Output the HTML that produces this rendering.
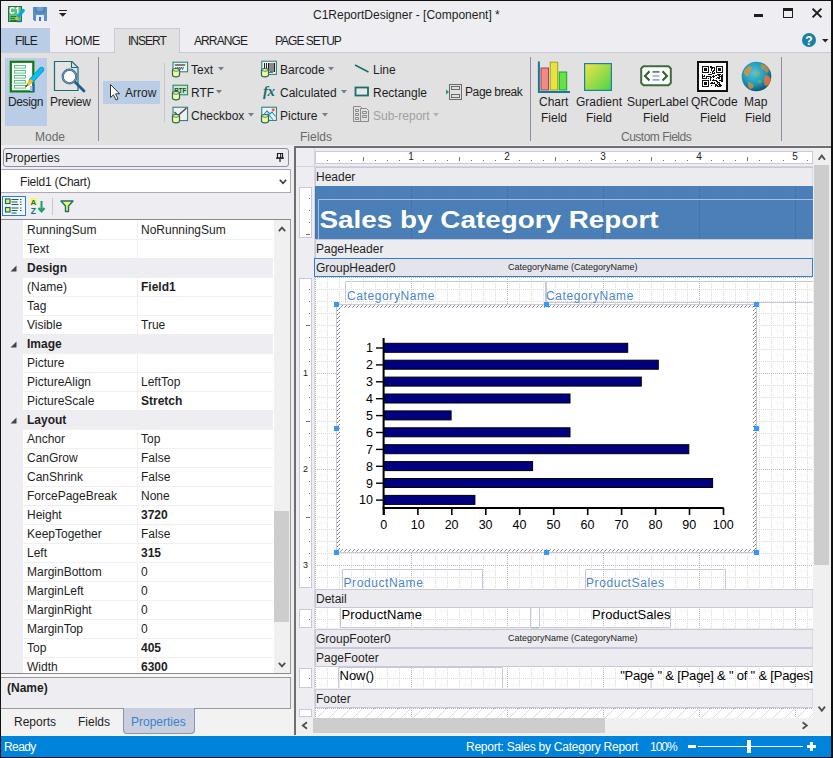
<!DOCTYPE html>
<html><head><meta charset="utf-8">
<style>
*{box-sizing:border-box}
html,body{margin:0;padding:0}
body{width:833px;height:758px;overflow:hidden;position:relative;background:#eeeef2;font-family:"Liberation Sans",sans-serif;font-size:12px;color:#1e1e1e}
.a{position:absolute}
.t{position:absolute;white-space:nowrap;line-height:14px;font-size:12px}
.b{font-weight:bold}
svg{position:absolute;overflow:visible}
</style></head><body>
<div class="a" style="left:0;top:0;width:833px;height:53px;background:#eeeef2"></div>
<div class="t" style="left:313px;top:8px;">C1ReportDesigner - [Component] *</div>
<div class="a" style="left:1px;top:28px;width:49px;height:25px;background:#b9cde6"></div>
<div class="t" style="left:15px;top:34px;letter-spacing:-0.9px">FILE</div>
<div class="t" style="left:65px;top:34px;letter-spacing:-0.3px">HOME</div>
<div class="a" style="left:114px;top:28px;width:66px;height:26px;background:#e1e1e1;border:1px solid #c7cad9;border-bottom:none"></div>
<div class="t" style="left:128px;top:34px;letter-spacing:-1px">INSERT</div>
<div class="t" style="left:194px;top:34px;letter-spacing:-0.9px">ARRANGE</div>
<div class="t" style="left:275px;top:34px;letter-spacing:-1px">PAGE SETUP</div>
<div class="a" style="left:0;top:52px;width:114px;height:1px;background:#c7cad9"></div>
<div class="a" style="left:180px;top:52px;width:653px;height:1px;background:#c7cad9"></div>
<div class="a" style="left:0;top:53px;width:833px;height:92px;background:#e1e1e1"></div>


<!-- ===== TITLE BAR ICONS ===== -->
<svg style="left:7px;top:5px" width="18" height="18" viewBox="0 0 18 18">
 <rect x="1.5" y="1.5" width="13" height="15" fill="#5cbf80" stroke="#2e6e3c" stroke-width="1"/>
 <path d="M7.2 3.6 Q6.6 2.6 5.2 2.6 Q3.2 2.6 3.2 5.4 Q3.2 8.2 5.2 8.2 Q6.6 8.2 7.2 7.2" fill="none" stroke="#fff" stroke-width="1.3"/><path d="M9 3.8 L10.8 2.6 V8.4" fill="none" stroke="#fff" stroke-width="1.3"/>
 <path d="M3.5 11.5h6M3.5 13.5h5M3.5 15.5h6" stroke="#0b8a2a" stroke-width="1"/>
 <path d="M16.3 5.5 L10.5 12.5" stroke="#00a8f0" stroke-width="3.2" stroke-linecap="round"/>
 <path d="M10.8 12.2 L8.7 14.6" stroke="#f5b800" stroke-width="2.6"/>
 <path d="M9 15.5 l-1 1" stroke="#222" stroke-width="1"/>
 <path d="M10 16.5 h4" stroke="#1f60c0" stroke-width="1.4"/>
</svg>
<svg style="left:33px;top:7px" width="14" height="14" viewBox="0 0 14 14">
 <path d="M0 0h14v14H1.5L0 12.5z" fill="#5b8fc8"/>
 <rect x="3" y="0" width="8" height="5" fill="#6f9fd6"/>
 <path d="M3 0v5h8V0" fill="none" stroke="#3f73b0" stroke-width="1"/>
 <rect x="3" y="8" width="8" height="6" fill="#e8eef8"/>
 <rect x="6" y="10" width="2" height="4" fill="#3f73b0"/>
</svg>
<div class="a" style="left:59px;top:10px;width:8px;height:1px;background:#222"></div>
<svg style="left:59px;top:13px" width="8" height="4" viewBox="0 0 8 4"><path d="M0 0h7.5L3.75 3.8z" fill="#222"/></svg>

<div class="a" style="left:754px;top:14px;width:9px;height:2.6px;background:#1e1e1e"></div>
<div class="a" style="left:783px;top:8px;width:10px;height:10px;border:1px solid #1e1e1e;border-top:3px solid #1e1e1e"></div>
<svg style="left:812px;top:8px" width="10" height="10" viewBox="0 0 10 10"><path d="M0.6 0.6 9.4 9.4M9.4 0.6 0.6 9.4" stroke="#1e1e1e" stroke-width="2"/></svg>
<svg style="left:802px;top:33px" width="14" height="14" viewBox="0 0 14 14"><circle cx="7" cy="7" r="7" fill="#1b7fa6"/><text x="7" y="11.5" text-anchor="middle" font-family="Liberation Sans" font-weight="bold" font-size="12" fill="#fff">?</text></svg>
<svg style="left:822px;top:39px" width="7" height="4" viewBox="0 0 7 4"><path d="M0 0h6.5L3.25 3.5z" fill="#222"/></svg>

<!-- ===== RIBBON CONTENT ===== -->
<!-- Mode group -->
<div class="a" style="left:5px;top:58px;width:42px;height:68px;background:#b9cde6"></div>
<svg style="left:9px;top:60px" width="36" height="34" viewBox="0 0 36 34">
 <rect x="1.8" y="1.8" width="22.5" height="29.6" fill="#fff" stroke="#0e7a12" stroke-width="2.2"/>
 <g fill="none" stroke="#5cc48a" stroke-width="1"><rect x="5.5" y="5.5" width="11" height="2.6"/><rect x="5.5" y="10.5" width="11" height="2.6"/><rect x="5.5" y="15.5" width="11" height="2.6"/><rect x="5.5" y="20.5" width="11" height="2.6"/><rect x="5.5" y="25.5" width="11" height="2.6"/></g>
 <path d="M32.5 9.5 L22.5 20.5" stroke="#1a8fd0" stroke-width="5.4" stroke-linecap="round"/>
 <path d="M32.5 9.5 L22.5 20.5" stroke="#00c0f4" stroke-width="3.8" stroke-linecap="round"/>
 <path d="M22.8 20.2 L18.6 24.8" stroke="#f7c20a" stroke-width="3.4"/>
 <path d="M18.8 24.6 l-2 2" stroke="#222" stroke-width="1.2"/>
 <path d="M21 26h3v5h-3z" fill="#a9c6ea"/><path d="M24.5 24v8" stroke="#1f5fb0" stroke-width="2"/>
</svg>
<div class="t" style="left:8px;top:95px;letter-spacing:-0.4px">Design</div>
<svg style="left:53px;top:60px" width="34" height="34" viewBox="0 0 34 34">
 <path d="M1.5 1.5h17.5l6 6V30.5H1.5z" fill="#e4e4e4" stroke="#1a6e72" stroke-width="1.2"/>
 <path d="M18.5 1.5v6h6" fill="none" stroke="#1a6e72" stroke-width="1.1"/>
 <path d="M21 21 L31 31" stroke="#1f5d92" stroke-width="2.8" stroke-linecap="round"/>
 <circle cx="16.5" cy="16.5" r="6.8" fill="#fff" stroke="#2a5f8e" stroke-width="2.2"/>
 <circle cx="16.5" cy="16.5" r="6.8" fill="none" stroke="#8fb0cc" stroke-width="0.8"/>
</svg>
<div class="t" style="left:50px;top:95px;letter-spacing:-0.3px">Preview</div>
<div class="t" style="left:35px;top:130px;color:#6a6a6a">Mode</div>
<div class="a" style="left:98px;top:57px;width:1px;height:84px;background:#8e8ea2"></div>

<!-- Arrow -->
<div class="a" style="left:103px;top:81px;width:57px;height:23px;background:#b9cde6"></div>
<svg style="left:109px;top:83px" width="12" height="18" viewBox="0 0 12 18"><path d="M1.5 1.5 V14.5 L4.5 11.8 L7 17 L9 16 L6.6 10.8 L10.6 10.8 Z" fill="#fff" stroke="#333" stroke-width="1" stroke-linejoin="round"/></svg>
<div class="t" style="left:125px;top:86px">Arrow</div>
<div class="a" style="left:164px;top:63px;width:1px;height:59px;background:#c4c4d4"></div>

<!-- Fields group: col1 -->
<svg style="left:171px;top:61px" width="18" height="17" viewBox="0 0 18 17">
 <rect x="2" y="1.2" width="14.6" height="9.6" fill="#f2f2f2" stroke="#1f7a7a" stroke-width="1"/>
 <path d="M4 3l1 2 1-2 1 2 1-2 1 2 1-2 1 2 1-2 1 2 1-2M4.5 6l1 2.5 1-2.5 1 2.5 1-2.5 1 2.5 1-2.5 1 2.5 1-2.5" fill="none" stroke="#555" stroke-width="0.9"/>
 <path d="M1.5 9.2 Q1.2 7.5 5 7.5 Q8.8 7.5 8.5 9.2 V14 Q8.5 15.8 5 15.8 Q1.5 15.8 1.5 14 Z" fill="#fcfc90" stroke="#1a6e6e" stroke-width="1.2"/><path d="M2 9.6 Q5 11 8 9.6" fill="none" stroke="#1a6e6e" stroke-width="0.8"/>
</svg>
<div class="t" style="left:191px;top:63px">Text</div>
<svg style="left:218px;top:67px" width="7" height="4" viewBox="0 0 7 4"><path d="M0 0h6L3 3.5z" fill="#7b7b90"/></svg>

<svg style="left:171px;top:84px" width="18" height="17" viewBox="0 0 18 17">
 <rect x="2" y="1.2" width="14.6" height="9.6" fill="#bdf0bd" stroke="#1f7a7a" stroke-width="1"/>
 <text x="3.2" y="8.6" font-family="Liberation Sans" font-size="7" font-weight="bold" fill="#333" textLength="12" lengthAdjust="spacingAndGlyphs">RTF</text>
 <path d="M1.5 9.2 Q1.2 7.5 5 7.5 Q8.8 7.5 8.5 9.2 V14 Q8.5 15.8 5 15.8 Q1.5 15.8 1.5 14 Z" fill="#fcfc90" stroke="#1a6e6e" stroke-width="1.2"/><path d="M2 9.6 Q5 11 8 9.6" fill="none" stroke="#1a6e6e" stroke-width="0.8"/>
</svg>
<div class="t" style="left:191px;top:86px">RTF</div>
<svg style="left:216px;top:90px" width="7" height="4" viewBox="0 0 7 4"><path d="M0 0h6L3 3.5z" fill="#7b7b90"/></svg>

<svg style="left:171px;top:106px" width="18" height="18" viewBox="0 0 18 18">
 <rect x="2" y="1.2" width="14.6" height="13.4" fill="#efefef" stroke="#1f7a7a" stroke-width="1"/>
 <path d="M3.5 6 L7 9.5 L15.5 2" fill="none" stroke="#444" stroke-width="1.3"/>
 <path d="M1.5 10.2 Q1.2 8.5 5 8.5 Q8.8 8.5 8.5 10.2 V15 Q8.5 16.8 5 16.8 Q1.5 16.8 1.5 15 Z" fill="#fcfc90" stroke="#1a6e6e" stroke-width="1.2"/><path d="M2 10.6 Q5 12 8 10.6" fill="none" stroke="#1a6e6e" stroke-width="0.8"/>
</svg>
<div class="t" style="left:191px;top:109px">Checkbox</div>
<svg style="left:248px;top:113px" width="7" height="4" viewBox="0 0 7 4"><path d="M0 0h6L3 3.5z" fill="#7b7b90"/></svg>

<!-- col2 -->
<svg style="left:260px;top:60px" width="18" height="18" viewBox="0 0 18 18">
 <rect x="1.8" y="1.2" width="14.6" height="13.2" fill="#f2f2f2" stroke="#1f7a7a" stroke-width="1"/>
 <g fill="#222"><rect x="4" y="3" width="1" height="9"/><rect x="6" y="3" width="1" height="9"/><rect x="8" y="3" width="1.5" height="8"/><rect x="10.5" y="3" width="1" height="9"/><rect x="12.5" y="3" width="1" height="9"/><rect x="14" y="3" width="1" height="9"/></g><path d="M9 11.5l1 1.5 1-1.5 1 1.5 1-1.5" fill="none" stroke="#222" stroke-width="0.7"/>
 <path d="M1.5 10.2 Q1.2 8.5 5 8.5 Q8.8 8.5 8.5 10.2 V15 Q8.5 16.8 5 16.8 Q1.5 16.8 1.5 15 Z" fill="#fcfc90" stroke="#1a6e6e" stroke-width="1.2"/><path d="M2 10.6 Q5 12 8 10.6" fill="none" stroke="#1a6e6e" stroke-width="0.8"/>
</svg>
<div class="t" style="left:280px;top:63px">Barcode</div>
<svg style="left:328px;top:67px" width="7" height="4" viewBox="0 0 7 4"><path d="M0 0h6L3 3.5z" fill="#7b7b90"/></svg>

<div class="t" style="left:263px;top:84px;font-family:'Liberation Serif';font-style:italic;font-weight:bold;font-size:15px;color:#1a6e6e;letter-spacing:-0.5px">fx</div>
<div class="t" style="left:280px;top:86px">Calculated</div>
<svg style="left:341px;top:90px" width="7" height="4" viewBox="0 0 7 4"><path d="M0 0h6L3 3.5z" fill="#7b7b90"/></svg>

<svg style="left:260px;top:106px" width="18" height="18" viewBox="0 0 18 18">
 <rect x="1.8" y="1.2" width="14.6" height="13.2" fill="#f2f2f2" stroke="#1f7a7a" stroke-width="1"/>
 <path d="M2.5 10 L7 5 L10 8 L12 6 L15.5 10.5" fill="none" stroke="#1c8fb5" stroke-width="1.1"/>
 <path d="M4 12 L8 8 L13 13.5" fill="none" stroke="#1c8fb5" stroke-width="1.1"/>
 <circle cx="13.2" cy="3.8" r="1.6" fill="#f05a5a"/>
 <path d="M1.5 10.2 Q1.2 8.5 5 8.5 Q8.8 8.5 8.5 10.2 V15 Q8.5 16.8 5 16.8 Q1.5 16.8 1.5 15 Z" fill="#fcfc90" stroke="#1a6e6e" stroke-width="1.2"/><path d="M2 10.6 Q5 12 8 10.6" fill="none" stroke="#1a6e6e" stroke-width="0.8"/>
</svg>
<div class="t" style="left:280px;top:109px">Picture</div>
<svg style="left:322px;top:113px" width="7" height="4" viewBox="0 0 7 4"><path d="M0 0h6L3 3.5z" fill="#7b7b90"/></svg>

<!-- col3 -->
<svg style="left:354px;top:64px" width="16" height="10" viewBox="0 0 16 10"><path d="M1 1 L14.5 8" stroke="#1a6e6e" stroke-width="1.5"/></svg>
<div class="t" style="left:373px;top:63px">Line</div>
<svg style="left:354px;top:86px" width="16" height="11" viewBox="0 0 16 11"><rect x="1.5" y="1.5" width="12.5" height="8" fill="#e8e8e8" stroke="#1a6e6e" stroke-width="1.8"/></svg>
<div class="t" style="left:373px;top:86px">Rectangle</div>
<svg style="left:353px;top:106px" width="17" height="17" viewBox="0 0 17 17" fill="none" stroke="#8a8a8a" stroke-width="1">
 <path d="M0.5 0.5h7l1 1v14h-8z" fill="#e1e1e1"/><path d="M2.5 3.5h3v2h-3zM2.5 7.5h3v2h-3zM2.5 11.5h3v2h-3z"/>
 <path d="M7.5 2.5h6l2 2v11h-8z" fill="#e1e1e1"/><path d="M9.5 5.5h4v2h-4zM9.5 9.5h4v2h-4z"/>
</svg>
<div class="t" style="left:373px;top:109px;color:#a0a0a0">Sub-report</div>
<svg style="left:433px;top:113px" width="7" height="4" viewBox="0 0 7 4"><path d="M0 0h6L3 3.5z" fill="#b0b0b8"/></svg>
<div class="t" style="left:300px;top:130px;color:#6a6a6a">Fields</div>

<!-- Page break -->
<svg style="left:445px;top:83px" width="18" height="18" viewBox="0 0 18 18" fill="none" stroke="#6a6a6a" stroke-width="1">
 <path d="M4.5 1v16M16.5 1v16M4 1.5h13M4 16.5h13"/>
 <rect x="6.5" y="3.5" width="8" height="3"/><rect x="6.5" y="11.5" width="8" height="3"/>
 <path d="M1 6.5v5l3-2.5z" fill="#1a9a70" stroke="none"/>
</svg>
<div class="t" style="left:465px;top:85px;letter-spacing:-0.4px">Page break</div>

<div class="a" style="left:530px;top:57px;width:1px;height:84px;background:#8e8ea2"></div>

<!-- Custom Fields -->
<svg style="left:537px;top:60px" width="34" height="34" viewBox="0 0 34 34">
 <rect x="4" y="8" width="7.5" height="22" fill="#f08a8a" stroke="#a84444" stroke-width="1"/>
 <rect x="13.2" y="2.2" width="7.5" height="27.8" fill="#e4e448" stroke="#a8a010" stroke-width="1"/>
 <rect x="22.2" y="12" width="7.5" height="18" fill="#64e24c" stroke="#20a020" stroke-width="1"/>
 <path d="M1.9 1.5 V32 H33" fill="none" stroke="#16789a" stroke-width="2"/>
</svg>
<div class="t" style="left:539px;top:95px">Chart</div>
<div class="t" style="left:541px;top:111px">Field</div>

<svg style="left:584px;top:63px" width="28" height="28" viewBox="0 0 28 28">
 <defs><linearGradient id="gr" x1="0" y1="0" x2="1" y2="1"><stop offset="0" stop-color="#f4e448"/><stop offset="1" stop-color="#48d448"/></linearGradient></defs>
 <rect x="0.6" y="0.6" width="26.8" height="26.8" fill="url(#gr)" stroke="#1b7fa6" stroke-width="1.2"/>
</svg>
<div class="t" style="left:576px;top:95px">Gradient</div>
<div class="t" style="left:586px;top:111px">Field</div>

<svg style="left:640px;top:64px" width="33" height="24" viewBox="0 0 33 24">
 <path d="M3.5 2.2H28.5L30.8 4.5V19L28.5 21.3H3.5L1.2 19V4.5Z" fill="#fff" stroke="#3d6b3d" stroke-width="2"/>
 <path d="M9.5 7.2L5 11.9L9.5 16.6M22.5 7.2L27 11.9L22.5 16.6" fill="none" stroke="#336633" stroke-width="2.2"/>
 <path d="M12.5 7.9H19.5" stroke="#4a7a4a" stroke-width="1.6"/>
 <path d="M12.5 12H19.5M12.5 15.9H19.5" stroke="#95aadc" stroke-width="1.6"/>
</svg>
<div class="t" style="left:627px;top:95px">SuperLabel</div>
<div class="t" style="left:643px;top:111px">Field</div>

<svg style="left:697px;top:61px" width="31" height="31" viewBox="0 0 31 31">
 <rect x="1" y="1" width="29" height="29" fill="#fff" stroke="#111" stroke-width="2"/>
 <path fill="#111" d="M5 5h7v1h-7zM13 5h2v1h-2zM19 5h7v1h-7zM5 6h1v1h-1zM11 6h1v1h-1zM13 6h5v1h-5zM19 6h1v1h-1zM25 6h1v1h-1zM5 7h1v1h-1zM7 7h3v1h-3zM11 7h1v1h-1zM14 7h2v1h-2zM17 7h1v1h-1zM19 7h1v1h-1zM21 7h3v1h-3zM25 7h1v1h-1zM5 8h1v1h-1zM7 8h3v1h-3zM11 8h1v1h-1zM14 8h1v1h-1zM17 8h1v1h-1zM19 8h1v1h-1zM21 8h3v1h-3zM25 8h1v1h-1zM5 9h1v1h-1zM7 9h3v1h-3zM11 9h1v1h-1zM14 9h1v1h-1zM16 9h2v1h-2zM19 9h1v1h-1zM21 9h3v1h-3zM25 9h1v1h-1zM5 10h1v1h-1zM11 10h1v1h-1zM15 10h2v1h-2zM19 10h1v1h-1zM25 10h1v1h-1zM5 11h7v1h-7zM13 11h1v1h-1zM15 11h1v1h-1zM17 11h1v1h-1zM19 11h7v1h-7zM15 12h3v1h-3zM5 13h1v1h-1zM11 13h4v1h-4zM20 13h4v1h-4zM25 13h1v1h-1zM5 14h1v1h-1zM7 14h1v1h-1zM16 14h1v1h-1zM18 14h2v1h-2zM21 14h2v1h-2zM24 14h2v1h-2zM5 15h3v1h-3zM9 15h5v1h-5zM15 15h3v1h-3zM22 15h4v1h-4zM5 16h1v1h-1zM9 16h1v1h-1zM13 16h2v1h-2zM16 16h1v1h-1zM20 16h3v1h-3zM24 16h2v1h-2zM5 17h5v1h-5zM11 17h1v1h-1zM13 17h1v1h-1zM19 17h1v1h-1zM21 17h2v1h-2zM24 17h2v1h-2zM13 18h1v1h-1zM16 18h1v1h-1zM24 18h2v1h-2zM5 19h7v1h-7zM13 19h1v1h-1zM15 19h5v1h-5zM22 19h4v1h-4zM5 20h1v1h-1zM11 20h1v1h-1zM19 20h2v1h-2zM24 20h2v1h-2zM5 21h1v1h-1zM7 21h3v1h-3zM11 21h1v1h-1zM14 21h2v1h-2zM17 21h1v1h-1zM20 21h3v1h-3zM5 22h1v1h-1zM7 22h3v1h-3zM11 22h1v1h-1zM13 22h5v1h-5zM20 22h1v1h-1zM22 22h1v1h-1zM5 23h1v1h-1zM7 23h3v1h-3zM11 23h1v1h-1zM18 23h2v1h-2zM21 23h3v1h-3zM5 24h1v1h-1zM11 24h1v1h-1zM14 24h1v1h-1zM18 24h3v1h-3zM22 24h3v1h-3zM5 25h7v1h-7zM18 25h1v1h-1zM20 25h4v1h-4z"/>
</svg>
<div class="t" style="left:691px;top:95px">QRCode</div>
<div class="t" style="left:700px;top:111px">Field</div>

<svg style="left:741px;top:61px" width="31" height="31" viewBox="0 0 31 31">
 <defs><radialGradient id="gl" cx="0.42" cy="0.38" r="0.65"><stop offset="0" stop-color="#4cc8dc"/><stop offset="0.6" stop-color="#1d98b8"/><stop offset="1" stop-color="#0c5068"/></radialGradient>
 <clipPath id="gc"><circle cx="15.5" cy="15.5" r="14.8"/></clipPath></defs>
 <circle cx="15.5" cy="15.5" r="14.8" fill="url(#gl)"/>
 <g clip-path="url(#gc)">
 <path d="M3 10 Q6 5 10 5 Q12 8 10 10 Q7 12 8 15 Q5 16 4 14 Q2 12 3 10Z" fill="#e49036" opacity="0.8"/>
 <path d="M20 3 Q25 3 28 8 Q28 11 26 12 Q23 9 21 8 Q19 6 20 3Z" fill="#e08c3a" opacity="0.7"/>
 <path d="M24 14 Q30 15 30 20 Q28 25 24 25 Q22 20 24 14Z" fill="#e6743a" opacity="0.9"/>
 <path d="M7 21 Q11 21 13 25 Q12 28 9 28 Q6 26 7 21Z" fill="#d8903c" opacity="0.75"/>
 <path d="M13 11 Q17 9 19 12 Q18 16 14 15Z" fill="#c8a050" opacity="0.55"/>
 <path d="M17 19 Q20 18 21 21 Q19 23 17 22Z" fill="#88b050" opacity="0.6"/>
 </g>
</svg>
<div class="t" style="left:744px;top:95px">Map</div>
<div class="t" style="left:745px;top:111px">Field</div>
<div class="t" style="left:621px;top:130px;color:#6a6a6a;letter-spacing:-0.5px">Custom Fields</div>
<div class="a" style="left:781px;top:57px;width:1px;height:84px;background:#8e8ea2"></div>

<!-- ===== LEFT PANEL ===== -->
<div class="a" style="left:0;top:145px;width:294px;height:591px;background:#eeeef2"></div>
<div class="a" style="left:3px;top:148px;width:286px;height:19px;border:1px solid #8e8e9e;border-radius:3px;background:#eeeef2"></div>
<div class="t" style="left:5px;top:151px">Properties</div>
<svg style="left:276px;top:153px" width="8" height="9" viewBox="0 0 8 9"><path d="M1.5 0.5h5v4.5h-5z" fill="none" stroke="#1e1e1e" stroke-width="1.2"/><path d="M0 5.2h8M4 5v4" stroke="#1e1e1e" stroke-width="1.2"/><path d="M4.6 1v4" stroke="#1e1e1e" stroke-width="1"/></svg>
<div class="a" style="left:1px;top:169px;width:290px;height:24px;border:1px solid #a9a9b9;border-left:none;background:#fff"></div>
<div class="t" style="left:20px;top:175px;letter-spacing:-0.2px">Field1 (Chart)</div>
<svg style="left:279px;top:179px" width="8" height="6" viewBox="0 0 8 6"><path d="M0.8 0.8 L4 4.4 L7.2 0.8" fill="none" stroke="#3a3a3a" stroke-width="1.6"/></svg>

<!-- toolbar -->
<div class="a" style="left:2px;top:196px;width:24px;height:20px;border:1px solid #2a7ed8;background:#f4f7fb"></div>
<svg style="left:5px;top:198px" width="18" height="16" viewBox="0 0 18 16">
 <rect x="0.5" y="1" width="4.5" height="4.5" fill="#ecec70" stroke="#1a6e5a" stroke-width="1.2"/>
 <rect x="0.5" y="9.5" width="4.5" height="4.5" fill="#ecec70" stroke="#1a6e5a" stroke-width="1.2"/>
 <path d="M6.5 1.5h7M6.5 4h6M6.5 6.5h7M6.5 10h7M6.5 12.5h6M6.5 15h5" stroke="#1a5e5a" stroke-width="1.2"/>
 <path d="M15 1.5h1.5M15 4h1.5M15 6.5h1.5M15 10h1.5M15 12.5h1.5" stroke="#1a5e5a" stroke-width="1.2"/>
</svg>
<svg style="left:30px;top:198px" width="16" height="16" viewBox="0 0 16 16">
 <rect x="0" y="0" width="7" height="7" fill="#f8f870"/>
 <text x="0.5" y="7" font-family="Liberation Sans" font-weight="bold" font-size="8" fill="#1a6e6e">A</text>
 <text x="0.7" y="15.5" font-family="Liberation Sans" font-weight="bold" font-size="8.5" fill="#1a6e6e">Z</text>
 <path d="M11.5 3v10M8.5 10l3 3.5 3-3.5" fill="none" stroke="#18a060" stroke-width="2"/>
</svg>
<div class="a" style="left:52px;top:198px;width:1px;height:17px;background:#c8c8d0"></div>
<svg style="left:60px;top:200px" width="14" height="12" viewBox="0 0 14 12"><path d="M1 1h12L8.5 6v5.5h-3V6z" fill="#f8f870" stroke="#1a6e6e" stroke-width="1.4" stroke-linejoin="round"/></svg>

<!-- grid -->
<div class="a" style="left:1px;top:674px;width:290px;height:3px;background:#f7f7f7"></div>
<div class="a" style="left:1px;top:219px;width:290px;height:455px;border-top:1px solid #8a8a8a;border-right:1px solid #9a9a9a;border-bottom:1px solid #8a8a8a;background:#fff"></div>
<div class="a" style="left:1px;top:220px;width:22px;height:453px;background:#eeeef2"></div>
<div class="a" style="left:137px;top:220px;width:1px;height:453px;background:#f0f0f0"></div>
<div id="grid">
<div class="a" style="left:23px;top:239px;width:250px;height:1px;background:#f0f0f0"></div>
<div class="t" style="left:27px;top:223px">RunningSum</div>
<div class="t" style="left:141px;top:223px">NoRunningSum</div>
<div class="a" style="left:23px;top:258px;width:250px;height:1px;background:#f0f0f0"></div>
<div class="t" style="left:27px;top:242px">Text</div>
<div class="a" style="left:23px;top:277px;width:250px;height:1px;background:#f0f0f0"></div>
<div class="a" style="left:1px;top:258px;width:272px;height:19px;background:#eeeef2"></div>
<svg style="left:10px;top:265px" width="7" height="7" viewBox="0 0 7 7"><path d="M6.5 0.5V6.5H0.5z" fill="#444"/></svg>
<div class="t b" style="left:27px;top:261px">Design</div>
<div class="a" style="left:23px;top:296px;width:250px;height:1px;background:#f0f0f0"></div>
<div class="t" style="left:27px;top:280px">(Name)</div>
<div class="t b" style="left:141px;top:280px">Field1</div>
<div class="a" style="left:23px;top:315px;width:250px;height:1px;background:#f0f0f0"></div>
<div class="t" style="left:27px;top:299px">Tag</div>
<div class="a" style="left:23px;top:334px;width:250px;height:1px;background:#f0f0f0"></div>
<div class="t" style="left:27px;top:318px">Visible</div>
<div class="t" style="left:141px;top:318px">True</div>
<div class="a" style="left:23px;top:353px;width:250px;height:1px;background:#f0f0f0"></div>
<div class="a" style="left:1px;top:334px;width:272px;height:19px;background:#eeeef2"></div>
<svg style="left:10px;top:341px" width="7" height="7" viewBox="0 0 7 7"><path d="M6.5 0.5V6.5H0.5z" fill="#444"/></svg>
<div class="t b" style="left:27px;top:337px">Image</div>
<div class="a" style="left:23px;top:372px;width:250px;height:1px;background:#f0f0f0"></div>
<div class="t" style="left:27px;top:356px">Picture</div>
<div class="a" style="left:23px;top:391px;width:250px;height:1px;background:#f0f0f0"></div>
<div class="t" style="left:27px;top:375px">PictureAlign</div>
<div class="t" style="left:141px;top:375px">LeftTop</div>
<div class="a" style="left:23px;top:410px;width:250px;height:1px;background:#f0f0f0"></div>
<div class="t" style="left:27px;top:394px">PictureScale</div>
<div class="t b" style="left:141px;top:394px">Stretch</div>
<div class="a" style="left:23px;top:429px;width:250px;height:1px;background:#f0f0f0"></div>
<div class="a" style="left:1px;top:410px;width:272px;height:19px;background:#eeeef2"></div>
<svg style="left:10px;top:417px" width="7" height="7" viewBox="0 0 7 7"><path d="M6.5 0.5V6.5H0.5z" fill="#444"/></svg>
<div class="t b" style="left:27px;top:413px">Layout</div>
<div class="a" style="left:23px;top:448px;width:250px;height:1px;background:#f0f0f0"></div>
<div class="t" style="left:27px;top:432px">Anchor</div>
<div class="t" style="left:141px;top:432px">Top</div>
<div class="a" style="left:23px;top:467px;width:250px;height:1px;background:#f0f0f0"></div>
<div class="t" style="left:27px;top:451px">CanGrow</div>
<div class="t" style="left:141px;top:451px">False</div>
<div class="a" style="left:23px;top:486px;width:250px;height:1px;background:#f0f0f0"></div>
<div class="t" style="left:27px;top:470px">CanShrink</div>
<div class="t" style="left:141px;top:470px">False</div>
<div class="a" style="left:23px;top:505px;width:250px;height:1px;background:#f0f0f0"></div>
<div class="t" style="left:27px;top:489px">ForcePageBreak</div>
<div class="t" style="left:141px;top:489px">None</div>
<div class="a" style="left:23px;top:524px;width:250px;height:1px;background:#f0f0f0"></div>
<div class="t" style="left:27px;top:508px">Height</div>
<div class="t b" style="left:141px;top:508px">3720</div>
<div class="a" style="left:23px;top:543px;width:250px;height:1px;background:#f0f0f0"></div>
<div class="t" style="left:27px;top:527px">KeepTogether</div>
<div class="t" style="left:141px;top:527px">False</div>
<div class="a" style="left:23px;top:562px;width:250px;height:1px;background:#f0f0f0"></div>
<div class="t" style="left:27px;top:546px">Left</div>
<div class="t b" style="left:141px;top:546px">315</div>
<div class="a" style="left:23px;top:581px;width:250px;height:1px;background:#f0f0f0"></div>
<div class="t" style="left:27px;top:565px">MarginBottom</div>
<div class="t" style="left:141px;top:565px">0</div>
<div class="a" style="left:23px;top:600px;width:250px;height:1px;background:#f0f0f0"></div>
<div class="t" style="left:27px;top:584px">MarginLeft</div>
<div class="t" style="left:141px;top:584px">0</div>
<div class="a" style="left:23px;top:619px;width:250px;height:1px;background:#f0f0f0"></div>
<div class="t" style="left:27px;top:603px">MarginRight</div>
<div class="t" style="left:141px;top:603px">0</div>
<div class="a" style="left:23px;top:638px;width:250px;height:1px;background:#f0f0f0"></div>
<div class="t" style="left:27px;top:622px">MarginTop</div>
<div class="t" style="left:141px;top:622px">0</div>
<div class="a" style="left:23px;top:657px;width:250px;height:1px;background:#f0f0f0"></div>
<div class="t" style="left:27px;top:641px">Top</div>
<div class="t b" style="left:141px;top:641px">405</div>
<div class="t" style="left:27px;top:660px">Width</div>
<div class="t b" style="left:141px;top:660px">6300</div>
</div>
<!-- grid scrollbar -->
<div class="a" style="left:274px;top:220px;width:16px;height:453px;background:#f0f0f0"></div>
<div class="a" style="left:274px;top:511px;width:15px;height:111px;background:#cdcdcd"></div>
<svg style="left:278px;top:226px" width="8" height="6" viewBox="0 0 8 6"><path d="M0.8 5.2 L4 1.6 L7.2 5.2" fill="none" stroke="#505050" stroke-width="1.8"/></svg>
<svg style="left:278px;top:662px" width="8" height="6" viewBox="0 0 8 6"><path d="M0.8 0.8 L4 4.4 L7.2 0.8" fill="none" stroke="#505050" stroke-width="1.8"/></svg>

<!-- description -->
<div class="a" style="left:1px;top:677px;width:290px;height:32px;border:1px solid #9a9a9a;border-left:none;background:#eeeef2"></div>
<div class="t b" style="left:7px;top:681px">(Name)</div>

<!-- bottom tabs -->
<div class="a" style="left:1px;top:709px;width:293px;height:27px;background:#f2f2f2"></div>
<div class="t" style="left:14px;top:715px">Reports</div>
<div class="t" style="left:78px;top:715px">Fields</div>
<div class="a" style="left:123px;top:708px;width:72px;height:26px;background:#c9cfde;border:1px solid #8d93a8;border-top:none;border-radius:0 0 4px 4px"></div>
<div class="t" style="left:131px;top:715px;color:#3c80cc">Properties</div>

<svg style="left:0;top:0" width="833" height="758" viewBox="0 0 833 758" font-family="Liberation Sans">
<defs>
<pattern id="gHs" x="315" y="185" width="12" height="12" patternUnits="userSpaceOnUse"><rect x="0" y="0" width="1" height="1" fill="#4a7cb3"/><rect x="2" y="0" width="1" height="1" fill="#4a7cb3"/><rect x="4" y="0" width="1" height="1" fill="#4a7cb3"/><rect x="6" y="0" width="1" height="1" fill="#4a7cb3"/><rect x="8" y="0" width="1" height="1" fill="#4a7cb3"/><rect x="10" y="0" width="1" height="1" fill="#4a7cb3"/><rect x="0" y="2" width="1" height="1" fill="#4a7cb3"/><rect x="0" y="4" width="1" height="1" fill="#4a7cb3"/><rect x="0" y="6" width="1" height="1" fill="#4a7cb3"/><rect x="0" y="8" width="1" height="1" fill="#4a7cb3"/><rect x="0" y="10" width="1" height="1" fill="#4a7cb3"/></pattern><pattern id="gHL" x="315" y="185" width="96" height="96" patternUnits="userSpaceOnUse"><rect x="0" y="0" width="1" height="1" fill="#3b6aa0"/><rect x="2" y="0" width="1" height="1" fill="#3b6aa0"/><rect x="4" y="0" width="1" height="1" fill="#3b6aa0"/><rect x="6" y="0" width="1" height="1" fill="#3b6aa0"/><rect x="8" y="0" width="1" height="1" fill="#3b6aa0"/><rect x="10" y="0" width="1" height="1" fill="#3b6aa0"/><rect x="12" y="0" width="1" height="1" fill="#3b6aa0"/><rect x="14" y="0" width="1" height="1" fill="#3b6aa0"/><rect x="16" y="0" width="1" height="1" fill="#3b6aa0"/><rect x="18" y="0" width="1" height="1" fill="#3b6aa0"/><rect x="20" y="0" width="1" height="1" fill="#3b6aa0"/><rect x="22" y="0" width="1" height="1" fill="#3b6aa0"/><rect x="24" y="0" width="1" height="1" fill="#3b6aa0"/><rect x="26" y="0" width="1" height="1" fill="#3b6aa0"/><rect x="28" y="0" width="1" height="1" fill="#3b6aa0"/><rect x="30" y="0" width="1" height="1" fill="#3b6aa0"/><rect x="32" y="0" width="1" height="1" fill="#3b6aa0"/><rect x="34" y="0" width="1" height="1" fill="#3b6aa0"/><rect x="36" y="0" width="1" height="1" fill="#3b6aa0"/><rect x="38" y="0" width="1" height="1" fill="#3b6aa0"/><rect x="40" y="0" width="1" height="1" fill="#3b6aa0"/><rect x="42" y="0" width="1" height="1" fill="#3b6aa0"/><rect x="44" y="0" width="1" height="1" fill="#3b6aa0"/><rect x="46" y="0" width="1" height="1" fill="#3b6aa0"/><rect x="48" y="0" width="1" height="1" fill="#3b6aa0"/><rect x="50" y="0" width="1" height="1" fill="#3b6aa0"/><rect x="52" y="0" width="1" height="1" fill="#3b6aa0"/><rect x="54" y="0" width="1" height="1" fill="#3b6aa0"/><rect x="56" y="0" width="1" height="1" fill="#3b6aa0"/><rect x="58" y="0" width="1" height="1" fill="#3b6aa0"/><rect x="60" y="0" width="1" height="1" fill="#3b6aa0"/><rect x="62" y="0" width="1" height="1" fill="#3b6aa0"/><rect x="64" y="0" width="1" height="1" fill="#3b6aa0"/><rect x="66" y="0" width="1" height="1" fill="#3b6aa0"/><rect x="68" y="0" width="1" height="1" fill="#3b6aa0"/><rect x="70" y="0" width="1" height="1" fill="#3b6aa0"/><rect x="72" y="0" width="1" height="1" fill="#3b6aa0"/><rect x="74" y="0" width="1" height="1" fill="#3b6aa0"/><rect x="76" y="0" width="1" height="1" fill="#3b6aa0"/><rect x="78" y="0" width="1" height="1" fill="#3b6aa0"/><rect x="80" y="0" width="1" height="1" fill="#3b6aa0"/><rect x="82" y="0" width="1" height="1" fill="#3b6aa0"/><rect x="84" y="0" width="1" height="1" fill="#3b6aa0"/><rect x="86" y="0" width="1" height="1" fill="#3b6aa0"/><rect x="88" y="0" width="1" height="1" fill="#3b6aa0"/><rect x="90" y="0" width="1" height="1" fill="#3b6aa0"/><rect x="92" y="0" width="1" height="1" fill="#3b6aa0"/><rect x="94" y="0" width="1" height="1" fill="#3b6aa0"/><rect x="0" y="2" width="1" height="1" fill="#3b6aa0"/><rect x="0" y="4" width="1" height="1" fill="#3b6aa0"/><rect x="0" y="6" width="1" height="1" fill="#3b6aa0"/><rect x="0" y="8" width="1" height="1" fill="#3b6aa0"/><rect x="0" y="10" width="1" height="1" fill="#3b6aa0"/><rect x="0" y="12" width="1" height="1" fill="#3b6aa0"/><rect x="0" y="14" width="1" height="1" fill="#3b6aa0"/><rect x="0" y="16" width="1" height="1" fill="#3b6aa0"/><rect x="0" y="18" width="1" height="1" fill="#3b6aa0"/><rect x="0" y="20" width="1" height="1" fill="#3b6aa0"/><rect x="0" y="22" width="1" height="1" fill="#3b6aa0"/><rect x="0" y="24" width="1" height="1" fill="#3b6aa0"/><rect x="0" y="26" width="1" height="1" fill="#3b6aa0"/><rect x="0" y="28" width="1" height="1" fill="#3b6aa0"/><rect x="0" y="30" width="1" height="1" fill="#3b6aa0"/><rect x="0" y="32" width="1" height="1" fill="#3b6aa0"/><rect x="0" y="34" width="1" height="1" fill="#3b6aa0"/><rect x="0" y="36" width="1" height="1" fill="#3b6aa0"/><rect x="0" y="38" width="1" height="1" fill="#3b6aa0"/><rect x="0" y="40" width="1" height="1" fill="#3b6aa0"/><rect x="0" y="42" width="1" height="1" fill="#3b6aa0"/><rect x="0" y="44" width="1" height="1" fill="#3b6aa0"/><rect x="0" y="46" width="1" height="1" fill="#3b6aa0"/><rect x="0" y="48" width="1" height="1" fill="#3b6aa0"/><rect x="0" y="50" width="1" height="1" fill="#3b6aa0"/><rect x="0" y="52" width="1" height="1" fill="#3b6aa0"/><rect x="0" y="54" width="1" height="1" fill="#3b6aa0"/><rect x="0" y="56" width="1" height="1" fill="#3b6aa0"/><rect x="0" y="58" width="1" height="1" fill="#3b6aa0"/><rect x="0" y="60" width="1" height="1" fill="#3b6aa0"/><rect x="0" y="62" width="1" height="1" fill="#3b6aa0"/><rect x="0" y="64" width="1" height="1" fill="#3b6aa0"/><rect x="0" y="66" width="1" height="1" fill="#3b6aa0"/><rect x="0" y="68" width="1" height="1" fill="#3b6aa0"/><rect x="0" y="70" width="1" height="1" fill="#3b6aa0"/><rect x="0" y="72" width="1" height="1" fill="#3b6aa0"/><rect x="0" y="74" width="1" height="1" fill="#3b6aa0"/><rect x="0" y="76" width="1" height="1" fill="#3b6aa0"/><rect x="0" y="78" width="1" height="1" fill="#3b6aa0"/><rect x="0" y="80" width="1" height="1" fill="#3b6aa0"/><rect x="0" y="82" width="1" height="1" fill="#3b6aa0"/><rect x="0" y="84" width="1" height="1" fill="#3b6aa0"/><rect x="0" y="86" width="1" height="1" fill="#3b6aa0"/><rect x="0" y="88" width="1" height="1" fill="#3b6aa0"/><rect x="0" y="90" width="1" height="1" fill="#3b6aa0"/><rect x="0" y="92" width="1" height="1" fill="#3b6aa0"/><rect x="0" y="94" width="1" height="1" fill="#3b6aa0"/></pattern>
<pattern id="gGs" x="315" y="277" width="12" height="12" patternUnits="userSpaceOnUse"><rect x="0" y="0" width="1" height="1" fill="#dadada"/><rect x="2" y="0" width="1" height="1" fill="#dadada"/><rect x="4" y="0" width="1" height="1" fill="#dadada"/><rect x="6" y="0" width="1" height="1" fill="#dadada"/><rect x="8" y="0" width="1" height="1" fill="#dadada"/><rect x="10" y="0" width="1" height="1" fill="#dadada"/><rect x="0" y="2" width="1" height="1" fill="#dadada"/><rect x="0" y="4" width="1" height="1" fill="#dadada"/><rect x="0" y="6" width="1" height="1" fill="#dadada"/><rect x="0" y="8" width="1" height="1" fill="#dadada"/><rect x="0" y="10" width="1" height="1" fill="#dadada"/></pattern><pattern id="gGL" x="315" y="277" width="96" height="96" patternUnits="userSpaceOnUse"><rect x="0" y="0" width="1" height="1" fill="#b8b8b8"/><rect x="2" y="0" width="1" height="1" fill="#b8b8b8"/><rect x="4" y="0" width="1" height="1" fill="#b8b8b8"/><rect x="6" y="0" width="1" height="1" fill="#b8b8b8"/><rect x="8" y="0" width="1" height="1" fill="#b8b8b8"/><rect x="10" y="0" width="1" height="1" fill="#b8b8b8"/><rect x="12" y="0" width="1" height="1" fill="#b8b8b8"/><rect x="14" y="0" width="1" height="1" fill="#b8b8b8"/><rect x="16" y="0" width="1" height="1" fill="#b8b8b8"/><rect x="18" y="0" width="1" height="1" fill="#b8b8b8"/><rect x="20" y="0" width="1" height="1" fill="#b8b8b8"/><rect x="22" y="0" width="1" height="1" fill="#b8b8b8"/><rect x="24" y="0" width="1" height="1" fill="#b8b8b8"/><rect x="26" y="0" width="1" height="1" fill="#b8b8b8"/><rect x="28" y="0" width="1" height="1" fill="#b8b8b8"/><rect x="30" y="0" width="1" height="1" fill="#b8b8b8"/><rect x="32" y="0" width="1" height="1" fill="#b8b8b8"/><rect x="34" y="0" width="1" height="1" fill="#b8b8b8"/><rect x="36" y="0" width="1" height="1" fill="#b8b8b8"/><rect x="38" y="0" width="1" height="1" fill="#b8b8b8"/><rect x="40" y="0" width="1" height="1" fill="#b8b8b8"/><rect x="42" y="0" width="1" height="1" fill="#b8b8b8"/><rect x="44" y="0" width="1" height="1" fill="#b8b8b8"/><rect x="46" y="0" width="1" height="1" fill="#b8b8b8"/><rect x="48" y="0" width="1" height="1" fill="#b8b8b8"/><rect x="50" y="0" width="1" height="1" fill="#b8b8b8"/><rect x="52" y="0" width="1" height="1" fill="#b8b8b8"/><rect x="54" y="0" width="1" height="1" fill="#b8b8b8"/><rect x="56" y="0" width="1" height="1" fill="#b8b8b8"/><rect x="58" y="0" width="1" height="1" fill="#b8b8b8"/><rect x="60" y="0" width="1" height="1" fill="#b8b8b8"/><rect x="62" y="0" width="1" height="1" fill="#b8b8b8"/><rect x="64" y="0" width="1" height="1" fill="#b8b8b8"/><rect x="66" y="0" width="1" height="1" fill="#b8b8b8"/><rect x="68" y="0" width="1" height="1" fill="#b8b8b8"/><rect x="70" y="0" width="1" height="1" fill="#b8b8b8"/><rect x="72" y="0" width="1" height="1" fill="#b8b8b8"/><rect x="74" y="0" width="1" height="1" fill="#b8b8b8"/><rect x="76" y="0" width="1" height="1" fill="#b8b8b8"/><rect x="78" y="0" width="1" height="1" fill="#b8b8b8"/><rect x="80" y="0" width="1" height="1" fill="#b8b8b8"/><rect x="82" y="0" width="1" height="1" fill="#b8b8b8"/><rect x="84" y="0" width="1" height="1" fill="#b8b8b8"/><rect x="86" y="0" width="1" height="1" fill="#b8b8b8"/><rect x="88" y="0" width="1" height="1" fill="#b8b8b8"/><rect x="90" y="0" width="1" height="1" fill="#b8b8b8"/><rect x="92" y="0" width="1" height="1" fill="#b8b8b8"/><rect x="94" y="0" width="1" height="1" fill="#b8b8b8"/><rect x="0" y="2" width="1" height="1" fill="#b8b8b8"/><rect x="0" y="4" width="1" height="1" fill="#b8b8b8"/><rect x="0" y="6" width="1" height="1" fill="#b8b8b8"/><rect x="0" y="8" width="1" height="1" fill="#b8b8b8"/><rect x="0" y="10" width="1" height="1" fill="#b8b8b8"/><rect x="0" y="12" width="1" height="1" fill="#b8b8b8"/><rect x="0" y="14" width="1" height="1" fill="#b8b8b8"/><rect x="0" y="16" width="1" height="1" fill="#b8b8b8"/><rect x="0" y="18" width="1" height="1" fill="#b8b8b8"/><rect x="0" y="20" width="1" height="1" fill="#b8b8b8"/><rect x="0" y="22" width="1" height="1" fill="#b8b8b8"/><rect x="0" y="24" width="1" height="1" fill="#b8b8b8"/><rect x="0" y="26" width="1" height="1" fill="#b8b8b8"/><rect x="0" y="28" width="1" height="1" fill="#b8b8b8"/><rect x="0" y="30" width="1" height="1" fill="#b8b8b8"/><rect x="0" y="32" width="1" height="1" fill="#b8b8b8"/><rect x="0" y="34" width="1" height="1" fill="#b8b8b8"/><rect x="0" y="36" width="1" height="1" fill="#b8b8b8"/><rect x="0" y="38" width="1" height="1" fill="#b8b8b8"/><rect x="0" y="40" width="1" height="1" fill="#b8b8b8"/><rect x="0" y="42" width="1" height="1" fill="#b8b8b8"/><rect x="0" y="44" width="1" height="1" fill="#b8b8b8"/><rect x="0" y="46" width="1" height="1" fill="#b8b8b8"/><rect x="0" y="48" width="1" height="1" fill="#b8b8b8"/><rect x="0" y="50" width="1" height="1" fill="#b8b8b8"/><rect x="0" y="52" width="1" height="1" fill="#b8b8b8"/><rect x="0" y="54" width="1" height="1" fill="#b8b8b8"/><rect x="0" y="56" width="1" height="1" fill="#b8b8b8"/><rect x="0" y="58" width="1" height="1" fill="#b8b8b8"/><rect x="0" y="60" width="1" height="1" fill="#b8b8b8"/><rect x="0" y="62" width="1" height="1" fill="#b8b8b8"/><rect x="0" y="64" width="1" height="1" fill="#b8b8b8"/><rect x="0" y="66" width="1" height="1" fill="#b8b8b8"/><rect x="0" y="68" width="1" height="1" fill="#b8b8b8"/><rect x="0" y="70" width="1" height="1" fill="#b8b8b8"/><rect x="0" y="72" width="1" height="1" fill="#b8b8b8"/><rect x="0" y="74" width="1" height="1" fill="#b8b8b8"/><rect x="0" y="76" width="1" height="1" fill="#b8b8b8"/><rect x="0" y="78" width="1" height="1" fill="#b8b8b8"/><rect x="0" y="80" width="1" height="1" fill="#b8b8b8"/><rect x="0" y="82" width="1" height="1" fill="#b8b8b8"/><rect x="0" y="84" width="1" height="1" fill="#b8b8b8"/><rect x="0" y="86" width="1" height="1" fill="#b8b8b8"/><rect x="0" y="88" width="1" height="1" fill="#b8b8b8"/><rect x="0" y="90" width="1" height="1" fill="#b8b8b8"/><rect x="0" y="92" width="1" height="1" fill="#b8b8b8"/><rect x="0" y="94" width="1" height="1" fill="#b8b8b8"/></pattern>
<pattern id="gDs" x="315" y="607" width="12" height="12" patternUnits="userSpaceOnUse"><rect x="0" y="0" width="1" height="1" fill="#dadada"/><rect x="2" y="0" width="1" height="1" fill="#dadada"/><rect x="4" y="0" width="1" height="1" fill="#dadada"/><rect x="6" y="0" width="1" height="1" fill="#dadada"/><rect x="8" y="0" width="1" height="1" fill="#dadada"/><rect x="10" y="0" width="1" height="1" fill="#dadada"/><rect x="0" y="2" width="1" height="1" fill="#dadada"/><rect x="0" y="4" width="1" height="1" fill="#dadada"/><rect x="0" y="6" width="1" height="1" fill="#dadada"/><rect x="0" y="8" width="1" height="1" fill="#dadada"/><rect x="0" y="10" width="1" height="1" fill="#dadada"/></pattern><pattern id="gDL" x="315" y="607" width="96" height="96" patternUnits="userSpaceOnUse"><rect x="0" y="0" width="1" height="1" fill="#b8b8b8"/><rect x="2" y="0" width="1" height="1" fill="#b8b8b8"/><rect x="4" y="0" width="1" height="1" fill="#b8b8b8"/><rect x="6" y="0" width="1" height="1" fill="#b8b8b8"/><rect x="8" y="0" width="1" height="1" fill="#b8b8b8"/><rect x="10" y="0" width="1" height="1" fill="#b8b8b8"/><rect x="12" y="0" width="1" height="1" fill="#b8b8b8"/><rect x="14" y="0" width="1" height="1" fill="#b8b8b8"/><rect x="16" y="0" width="1" height="1" fill="#b8b8b8"/><rect x="18" y="0" width="1" height="1" fill="#b8b8b8"/><rect x="20" y="0" width="1" height="1" fill="#b8b8b8"/><rect x="22" y="0" width="1" height="1" fill="#b8b8b8"/><rect x="24" y="0" width="1" height="1" fill="#b8b8b8"/><rect x="26" y="0" width="1" height="1" fill="#b8b8b8"/><rect x="28" y="0" width="1" height="1" fill="#b8b8b8"/><rect x="30" y="0" width="1" height="1" fill="#b8b8b8"/><rect x="32" y="0" width="1" height="1" fill="#b8b8b8"/><rect x="34" y="0" width="1" height="1" fill="#b8b8b8"/><rect x="36" y="0" width="1" height="1" fill="#b8b8b8"/><rect x="38" y="0" width="1" height="1" fill="#b8b8b8"/><rect x="40" y="0" width="1" height="1" fill="#b8b8b8"/><rect x="42" y="0" width="1" height="1" fill="#b8b8b8"/><rect x="44" y="0" width="1" height="1" fill="#b8b8b8"/><rect x="46" y="0" width="1" height="1" fill="#b8b8b8"/><rect x="48" y="0" width="1" height="1" fill="#b8b8b8"/><rect x="50" y="0" width="1" height="1" fill="#b8b8b8"/><rect x="52" y="0" width="1" height="1" fill="#b8b8b8"/><rect x="54" y="0" width="1" height="1" fill="#b8b8b8"/><rect x="56" y="0" width="1" height="1" fill="#b8b8b8"/><rect x="58" y="0" width="1" height="1" fill="#b8b8b8"/><rect x="60" y="0" width="1" height="1" fill="#b8b8b8"/><rect x="62" y="0" width="1" height="1" fill="#b8b8b8"/><rect x="64" y="0" width="1" height="1" fill="#b8b8b8"/><rect x="66" y="0" width="1" height="1" fill="#b8b8b8"/><rect x="68" y="0" width="1" height="1" fill="#b8b8b8"/><rect x="70" y="0" width="1" height="1" fill="#b8b8b8"/><rect x="72" y="0" width="1" height="1" fill="#b8b8b8"/><rect x="74" y="0" width="1" height="1" fill="#b8b8b8"/><rect x="76" y="0" width="1" height="1" fill="#b8b8b8"/><rect x="78" y="0" width="1" height="1" fill="#b8b8b8"/><rect x="80" y="0" width="1" height="1" fill="#b8b8b8"/><rect x="82" y="0" width="1" height="1" fill="#b8b8b8"/><rect x="84" y="0" width="1" height="1" fill="#b8b8b8"/><rect x="86" y="0" width="1" height="1" fill="#b8b8b8"/><rect x="88" y="0" width="1" height="1" fill="#b8b8b8"/><rect x="90" y="0" width="1" height="1" fill="#b8b8b8"/><rect x="92" y="0" width="1" height="1" fill="#b8b8b8"/><rect x="94" y="0" width="1" height="1" fill="#b8b8b8"/><rect x="0" y="2" width="1" height="1" fill="#b8b8b8"/><rect x="0" y="4" width="1" height="1" fill="#b8b8b8"/><rect x="0" y="6" width="1" height="1" fill="#b8b8b8"/><rect x="0" y="8" width="1" height="1" fill="#b8b8b8"/><rect x="0" y="10" width="1" height="1" fill="#b8b8b8"/><rect x="0" y="12" width="1" height="1" fill="#b8b8b8"/><rect x="0" y="14" width="1" height="1" fill="#b8b8b8"/><rect x="0" y="16" width="1" height="1" fill="#b8b8b8"/><rect x="0" y="18" width="1" height="1" fill="#b8b8b8"/><rect x="0" y="20" width="1" height="1" fill="#b8b8b8"/><rect x="0" y="22" width="1" height="1" fill="#b8b8b8"/><rect x="0" y="24" width="1" height="1" fill="#b8b8b8"/><rect x="0" y="26" width="1" height="1" fill="#b8b8b8"/><rect x="0" y="28" width="1" height="1" fill="#b8b8b8"/><rect x="0" y="30" width="1" height="1" fill="#b8b8b8"/><rect x="0" y="32" width="1" height="1" fill="#b8b8b8"/><rect x="0" y="34" width="1" height="1" fill="#b8b8b8"/><rect x="0" y="36" width="1" height="1" fill="#b8b8b8"/><rect x="0" y="38" width="1" height="1" fill="#b8b8b8"/><rect x="0" y="40" width="1" height="1" fill="#b8b8b8"/><rect x="0" y="42" width="1" height="1" fill="#b8b8b8"/><rect x="0" y="44" width="1" height="1" fill="#b8b8b8"/><rect x="0" y="46" width="1" height="1" fill="#b8b8b8"/><rect x="0" y="48" width="1" height="1" fill="#b8b8b8"/><rect x="0" y="50" width="1" height="1" fill="#b8b8b8"/><rect x="0" y="52" width="1" height="1" fill="#b8b8b8"/><rect x="0" y="54" width="1" height="1" fill="#b8b8b8"/><rect x="0" y="56" width="1" height="1" fill="#b8b8b8"/><rect x="0" y="58" width="1" height="1" fill="#b8b8b8"/><rect x="0" y="60" width="1" height="1" fill="#b8b8b8"/><rect x="0" y="62" width="1" height="1" fill="#b8b8b8"/><rect x="0" y="64" width="1" height="1" fill="#b8b8b8"/><rect x="0" y="66" width="1" height="1" fill="#b8b8b8"/><rect x="0" y="68" width="1" height="1" fill="#b8b8b8"/><rect x="0" y="70" width="1" height="1" fill="#b8b8b8"/><rect x="0" y="72" width="1" height="1" fill="#b8b8b8"/><rect x="0" y="74" width="1" height="1" fill="#b8b8b8"/><rect x="0" y="76" width="1" height="1" fill="#b8b8b8"/><rect x="0" y="78" width="1" height="1" fill="#b8b8b8"/><rect x="0" y="80" width="1" height="1" fill="#b8b8b8"/><rect x="0" y="82" width="1" height="1" fill="#b8b8b8"/><rect x="0" y="84" width="1" height="1" fill="#b8b8b8"/><rect x="0" y="86" width="1" height="1" fill="#b8b8b8"/><rect x="0" y="88" width="1" height="1" fill="#b8b8b8"/><rect x="0" y="90" width="1" height="1" fill="#b8b8b8"/><rect x="0" y="92" width="1" height="1" fill="#b8b8b8"/><rect x="0" y="94" width="1" height="1" fill="#b8b8b8"/></pattern>
<pattern id="gPs" x="315" y="666" width="12" height="12" patternUnits="userSpaceOnUse"><rect x="0" y="0" width="1" height="1" fill="#dadada"/><rect x="2" y="0" width="1" height="1" fill="#dadada"/><rect x="4" y="0" width="1" height="1" fill="#dadada"/><rect x="6" y="0" width="1" height="1" fill="#dadada"/><rect x="8" y="0" width="1" height="1" fill="#dadada"/><rect x="10" y="0" width="1" height="1" fill="#dadada"/><rect x="0" y="2" width="1" height="1" fill="#dadada"/><rect x="0" y="4" width="1" height="1" fill="#dadada"/><rect x="0" y="6" width="1" height="1" fill="#dadada"/><rect x="0" y="8" width="1" height="1" fill="#dadada"/><rect x="0" y="10" width="1" height="1" fill="#dadada"/></pattern><pattern id="gPL" x="315" y="666" width="96" height="96" patternUnits="userSpaceOnUse"><rect x="0" y="0" width="1" height="1" fill="#b8b8b8"/><rect x="2" y="0" width="1" height="1" fill="#b8b8b8"/><rect x="4" y="0" width="1" height="1" fill="#b8b8b8"/><rect x="6" y="0" width="1" height="1" fill="#b8b8b8"/><rect x="8" y="0" width="1" height="1" fill="#b8b8b8"/><rect x="10" y="0" width="1" height="1" fill="#b8b8b8"/><rect x="12" y="0" width="1" height="1" fill="#b8b8b8"/><rect x="14" y="0" width="1" height="1" fill="#b8b8b8"/><rect x="16" y="0" width="1" height="1" fill="#b8b8b8"/><rect x="18" y="0" width="1" height="1" fill="#b8b8b8"/><rect x="20" y="0" width="1" height="1" fill="#b8b8b8"/><rect x="22" y="0" width="1" height="1" fill="#b8b8b8"/><rect x="24" y="0" width="1" height="1" fill="#b8b8b8"/><rect x="26" y="0" width="1" height="1" fill="#b8b8b8"/><rect x="28" y="0" width="1" height="1" fill="#b8b8b8"/><rect x="30" y="0" width="1" height="1" fill="#b8b8b8"/><rect x="32" y="0" width="1" height="1" fill="#b8b8b8"/><rect x="34" y="0" width="1" height="1" fill="#b8b8b8"/><rect x="36" y="0" width="1" height="1" fill="#b8b8b8"/><rect x="38" y="0" width="1" height="1" fill="#b8b8b8"/><rect x="40" y="0" width="1" height="1" fill="#b8b8b8"/><rect x="42" y="0" width="1" height="1" fill="#b8b8b8"/><rect x="44" y="0" width="1" height="1" fill="#b8b8b8"/><rect x="46" y="0" width="1" height="1" fill="#b8b8b8"/><rect x="48" y="0" width="1" height="1" fill="#b8b8b8"/><rect x="50" y="0" width="1" height="1" fill="#b8b8b8"/><rect x="52" y="0" width="1" height="1" fill="#b8b8b8"/><rect x="54" y="0" width="1" height="1" fill="#b8b8b8"/><rect x="56" y="0" width="1" height="1" fill="#b8b8b8"/><rect x="58" y="0" width="1" height="1" fill="#b8b8b8"/><rect x="60" y="0" width="1" height="1" fill="#b8b8b8"/><rect x="62" y="0" width="1" height="1" fill="#b8b8b8"/><rect x="64" y="0" width="1" height="1" fill="#b8b8b8"/><rect x="66" y="0" width="1" height="1" fill="#b8b8b8"/><rect x="68" y="0" width="1" height="1" fill="#b8b8b8"/><rect x="70" y="0" width="1" height="1" fill="#b8b8b8"/><rect x="72" y="0" width="1" height="1" fill="#b8b8b8"/><rect x="74" y="0" width="1" height="1" fill="#b8b8b8"/><rect x="76" y="0" width="1" height="1" fill="#b8b8b8"/><rect x="78" y="0" width="1" height="1" fill="#b8b8b8"/><rect x="80" y="0" width="1" height="1" fill="#b8b8b8"/><rect x="82" y="0" width="1" height="1" fill="#b8b8b8"/><rect x="84" y="0" width="1" height="1" fill="#b8b8b8"/><rect x="86" y="0" width="1" height="1" fill="#b8b8b8"/><rect x="88" y="0" width="1" height="1" fill="#b8b8b8"/><rect x="90" y="0" width="1" height="1" fill="#b8b8b8"/><rect x="92" y="0" width="1" height="1" fill="#b8b8b8"/><rect x="94" y="0" width="1" height="1" fill="#b8b8b8"/><rect x="0" y="2" width="1" height="1" fill="#b8b8b8"/><rect x="0" y="4" width="1" height="1" fill="#b8b8b8"/><rect x="0" y="6" width="1" height="1" fill="#b8b8b8"/><rect x="0" y="8" width="1" height="1" fill="#b8b8b8"/><rect x="0" y="10" width="1" height="1" fill="#b8b8b8"/><rect x="0" y="12" width="1" height="1" fill="#b8b8b8"/><rect x="0" y="14" width="1" height="1" fill="#b8b8b8"/><rect x="0" y="16" width="1" height="1" fill="#b8b8b8"/><rect x="0" y="18" width="1" height="1" fill="#b8b8b8"/><rect x="0" y="20" width="1" height="1" fill="#b8b8b8"/><rect x="0" y="22" width="1" height="1" fill="#b8b8b8"/><rect x="0" y="24" width="1" height="1" fill="#b8b8b8"/><rect x="0" y="26" width="1" height="1" fill="#b8b8b8"/><rect x="0" y="28" width="1" height="1" fill="#b8b8b8"/><rect x="0" y="30" width="1" height="1" fill="#b8b8b8"/><rect x="0" y="32" width="1" height="1" fill="#b8b8b8"/><rect x="0" y="34" width="1" height="1" fill="#b8b8b8"/><rect x="0" y="36" width="1" height="1" fill="#b8b8b8"/><rect x="0" y="38" width="1" height="1" fill="#b8b8b8"/><rect x="0" y="40" width="1" height="1" fill="#b8b8b8"/><rect x="0" y="42" width="1" height="1" fill="#b8b8b8"/><rect x="0" y="44" width="1" height="1" fill="#b8b8b8"/><rect x="0" y="46" width="1" height="1" fill="#b8b8b8"/><rect x="0" y="48" width="1" height="1" fill="#b8b8b8"/><rect x="0" y="50" width="1" height="1" fill="#b8b8b8"/><rect x="0" y="52" width="1" height="1" fill="#b8b8b8"/><rect x="0" y="54" width="1" height="1" fill="#b8b8b8"/><rect x="0" y="56" width="1" height="1" fill="#b8b8b8"/><rect x="0" y="58" width="1" height="1" fill="#b8b8b8"/><rect x="0" y="60" width="1" height="1" fill="#b8b8b8"/><rect x="0" y="62" width="1" height="1" fill="#b8b8b8"/><rect x="0" y="64" width="1" height="1" fill="#b8b8b8"/><rect x="0" y="66" width="1" height="1" fill="#b8b8b8"/><rect x="0" y="68" width="1" height="1" fill="#b8b8b8"/><rect x="0" y="70" width="1" height="1" fill="#b8b8b8"/><rect x="0" y="72" width="1" height="1" fill="#b8b8b8"/><rect x="0" y="74" width="1" height="1" fill="#b8b8b8"/><rect x="0" y="76" width="1" height="1" fill="#b8b8b8"/><rect x="0" y="78" width="1" height="1" fill="#b8b8b8"/><rect x="0" y="80" width="1" height="1" fill="#b8b8b8"/><rect x="0" y="82" width="1" height="1" fill="#b8b8b8"/><rect x="0" y="84" width="1" height="1" fill="#b8b8b8"/><rect x="0" y="86" width="1" height="1" fill="#b8b8b8"/><rect x="0" y="88" width="1" height="1" fill="#b8b8b8"/><rect x="0" y="90" width="1" height="1" fill="#b8b8b8"/><rect x="0" y="92" width="1" height="1" fill="#b8b8b8"/><rect x="0" y="94" width="1" height="1" fill="#b8b8b8"/></pattern>
<pattern id="gFs" x="315" y="708" width="12" height="12" patternUnits="userSpaceOnUse"><rect x="0" y="0" width="1" height="1" fill="#d8d8d8"/><rect x="2" y="0" width="1" height="1" fill="#d8d8d8"/><rect x="4" y="0" width="1" height="1" fill="#d8d8d8"/><rect x="6" y="0" width="1" height="1" fill="#d8d8d8"/><rect x="8" y="0" width="1" height="1" fill="#d8d8d8"/><rect x="10" y="0" width="1" height="1" fill="#d8d8d8"/><rect x="0" y="2" width="1" height="1" fill="#d8d8d8"/><rect x="0" y="4" width="1" height="1" fill="#d8d8d8"/><rect x="0" y="6" width="1" height="1" fill="#d8d8d8"/><rect x="0" y="8" width="1" height="1" fill="#d8d8d8"/><rect x="0" y="10" width="1" height="1" fill="#d8d8d8"/></pattern><pattern id="gFL" x="315" y="708" width="96" height="96" patternUnits="userSpaceOnUse"><rect x="0" y="0" width="1" height="1" fill="#b0b0b0"/><rect x="2" y="0" width="1" height="1" fill="#b0b0b0"/><rect x="4" y="0" width="1" height="1" fill="#b0b0b0"/><rect x="6" y="0" width="1" height="1" fill="#b0b0b0"/><rect x="8" y="0" width="1" height="1" fill="#b0b0b0"/><rect x="10" y="0" width="1" height="1" fill="#b0b0b0"/><rect x="12" y="0" width="1" height="1" fill="#b0b0b0"/><rect x="14" y="0" width="1" height="1" fill="#b0b0b0"/><rect x="16" y="0" width="1" height="1" fill="#b0b0b0"/><rect x="18" y="0" width="1" height="1" fill="#b0b0b0"/><rect x="20" y="0" width="1" height="1" fill="#b0b0b0"/><rect x="22" y="0" width="1" height="1" fill="#b0b0b0"/><rect x="24" y="0" width="1" height="1" fill="#b0b0b0"/><rect x="26" y="0" width="1" height="1" fill="#b0b0b0"/><rect x="28" y="0" width="1" height="1" fill="#b0b0b0"/><rect x="30" y="0" width="1" height="1" fill="#b0b0b0"/><rect x="32" y="0" width="1" height="1" fill="#b0b0b0"/><rect x="34" y="0" width="1" height="1" fill="#b0b0b0"/><rect x="36" y="0" width="1" height="1" fill="#b0b0b0"/><rect x="38" y="0" width="1" height="1" fill="#b0b0b0"/><rect x="40" y="0" width="1" height="1" fill="#b0b0b0"/><rect x="42" y="0" width="1" height="1" fill="#b0b0b0"/><rect x="44" y="0" width="1" height="1" fill="#b0b0b0"/><rect x="46" y="0" width="1" height="1" fill="#b0b0b0"/><rect x="48" y="0" width="1" height="1" fill="#b0b0b0"/><rect x="50" y="0" width="1" height="1" fill="#b0b0b0"/><rect x="52" y="0" width="1" height="1" fill="#b0b0b0"/><rect x="54" y="0" width="1" height="1" fill="#b0b0b0"/><rect x="56" y="0" width="1" height="1" fill="#b0b0b0"/><rect x="58" y="0" width="1" height="1" fill="#b0b0b0"/><rect x="60" y="0" width="1" height="1" fill="#b0b0b0"/><rect x="62" y="0" width="1" height="1" fill="#b0b0b0"/><rect x="64" y="0" width="1" height="1" fill="#b0b0b0"/><rect x="66" y="0" width="1" height="1" fill="#b0b0b0"/><rect x="68" y="0" width="1" height="1" fill="#b0b0b0"/><rect x="70" y="0" width="1" height="1" fill="#b0b0b0"/><rect x="72" y="0" width="1" height="1" fill="#b0b0b0"/><rect x="74" y="0" width="1" height="1" fill="#b0b0b0"/><rect x="76" y="0" width="1" height="1" fill="#b0b0b0"/><rect x="78" y="0" width="1" height="1" fill="#b0b0b0"/><rect x="80" y="0" width="1" height="1" fill="#b0b0b0"/><rect x="82" y="0" width="1" height="1" fill="#b0b0b0"/><rect x="84" y="0" width="1" height="1" fill="#b0b0b0"/><rect x="86" y="0" width="1" height="1" fill="#b0b0b0"/><rect x="88" y="0" width="1" height="1" fill="#b0b0b0"/><rect x="90" y="0" width="1" height="1" fill="#b0b0b0"/><rect x="92" y="0" width="1" height="1" fill="#b0b0b0"/><rect x="94" y="0" width="1" height="1" fill="#b0b0b0"/><rect x="0" y="2" width="1" height="1" fill="#b0b0b0"/><rect x="0" y="4" width="1" height="1" fill="#b0b0b0"/><rect x="0" y="6" width="1" height="1" fill="#b0b0b0"/><rect x="0" y="8" width="1" height="1" fill="#b0b0b0"/><rect x="0" y="10" width="1" height="1" fill="#b0b0b0"/><rect x="0" y="12" width="1" height="1" fill="#b0b0b0"/><rect x="0" y="14" width="1" height="1" fill="#b0b0b0"/><rect x="0" y="16" width="1" height="1" fill="#b0b0b0"/><rect x="0" y="18" width="1" height="1" fill="#b0b0b0"/><rect x="0" y="20" width="1" height="1" fill="#b0b0b0"/><rect x="0" y="22" width="1" height="1" fill="#b0b0b0"/><rect x="0" y="24" width="1" height="1" fill="#b0b0b0"/><rect x="0" y="26" width="1" height="1" fill="#b0b0b0"/><rect x="0" y="28" width="1" height="1" fill="#b0b0b0"/><rect x="0" y="30" width="1" height="1" fill="#b0b0b0"/><rect x="0" y="32" width="1" height="1" fill="#b0b0b0"/><rect x="0" y="34" width="1" height="1" fill="#b0b0b0"/><rect x="0" y="36" width="1" height="1" fill="#b0b0b0"/><rect x="0" y="38" width="1" height="1" fill="#b0b0b0"/><rect x="0" y="40" width="1" height="1" fill="#b0b0b0"/><rect x="0" y="42" width="1" height="1" fill="#b0b0b0"/><rect x="0" y="44" width="1" height="1" fill="#b0b0b0"/><rect x="0" y="46" width="1" height="1" fill="#b0b0b0"/><rect x="0" y="48" width="1" height="1" fill="#b0b0b0"/><rect x="0" y="50" width="1" height="1" fill="#b0b0b0"/><rect x="0" y="52" width="1" height="1" fill="#b0b0b0"/><rect x="0" y="54" width="1" height="1" fill="#b0b0b0"/><rect x="0" y="56" width="1" height="1" fill="#b0b0b0"/><rect x="0" y="58" width="1" height="1" fill="#b0b0b0"/><rect x="0" y="60" width="1" height="1" fill="#b0b0b0"/><rect x="0" y="62" width="1" height="1" fill="#b0b0b0"/><rect x="0" y="64" width="1" height="1" fill="#b0b0b0"/><rect x="0" y="66" width="1" height="1" fill="#b0b0b0"/><rect x="0" y="68" width="1" height="1" fill="#b0b0b0"/><rect x="0" y="70" width="1" height="1" fill="#b0b0b0"/><rect x="0" y="72" width="1" height="1" fill="#b0b0b0"/><rect x="0" y="74" width="1" height="1" fill="#b0b0b0"/><rect x="0" y="76" width="1" height="1" fill="#b0b0b0"/><rect x="0" y="78" width="1" height="1" fill="#b0b0b0"/><rect x="0" y="80" width="1" height="1" fill="#b0b0b0"/><rect x="0" y="82" width="1" height="1" fill="#b0b0b0"/><rect x="0" y="84" width="1" height="1" fill="#b0b0b0"/><rect x="0" y="86" width="1" height="1" fill="#b0b0b0"/><rect x="0" y="88" width="1" height="1" fill="#b0b0b0"/><rect x="0" y="90" width="1" height="1" fill="#b0b0b0"/><rect x="0" y="92" width="1" height="1" fill="#b0b0b0"/><rect x="0" y="94" width="1" height="1" fill="#b0b0b0"/></pattern>
<pattern id="hatch" x="336" y="304" width="4" height="4" patternUnits="userSpaceOnUse"><rect fill="#fff" width="4" height="4"/><rect x="3" y="0" width="1" height="1" fill="#7a7a7a"/><rect x="2" y="1" width="1" height="1" fill="#a0a0a0"/><rect x="1" y="2" width="1" height="1" fill="#7a7a7a"/><rect x="0" y="3" width="1" height="1" fill="#b0b0b0"/></pattern>
<pattern id="hatchF" x="315" y="708" width="12" height="12" patternUnits="userSpaceOnUse"><rect x="11" y="0" width="1" height="1" fill="#dadada"/><rect x="10" y="1" width="1" height="1" fill="#dadada"/><rect x="9" y="2" width="1" height="1" fill="#dadada"/><rect x="8" y="3" width="1" height="1" fill="#dadada"/><rect x="7" y="4" width="1" height="1" fill="#dadada"/><rect x="6" y="5" width="1" height="1" fill="#dadada"/><rect x="5" y="6" width="1" height="1" fill="#dadada"/><rect x="4" y="7" width="1" height="1" fill="#dadada"/><rect x="3" y="8" width="1" height="1" fill="#dadada"/><rect x="2" y="9" width="1" height="1" fill="#dadada"/><rect x="1" y="10" width="1" height="1" fill="#dadada"/><rect x="0" y="11" width="1" height="1" fill="#dadada"/></pattern>
</defs>
<rect x="294" y="146" width="537" height="2" fill="#6e6e6e"/>
<rect x="294" y="146" width="2" height="590" fill="#6e6e6e"/>
<rect x="296" y="148" width="517" height="570" fill="#eeeef2"/>
<rect x="314" y="148" width="1" height="570" fill="#d6d6de"/>
<rect x="315.5" y="151.5" width="497" height="12" fill="#fff" stroke="#c9c9dc" stroke-width="1"/>
<rect x="296" y="166" width="517" height="1" fill="#d3d3dd"/>
<rect x="315" y="167" width="498" height="1" fill="#c8c8d6"/>
<rect x="327" y="160" width="1" height="1" fill="#707070"/>
<rect x="339" y="160" width="1" height="1" fill="#707070"/>
<rect x="351" y="160" width="1" height="1" fill="#707070"/>
<rect x="363" y="157" width="1" height="4" fill="#707070"/>
<rect x="375" y="160" width="1" height="1" fill="#707070"/>
<rect x="387" y="160" width="1" height="1" fill="#707070"/>
<rect x="399" y="160" width="1" height="1" fill="#707070"/>
<text x="411" y="160" font-size="10" text-anchor="middle" fill="#222">1</text>
<rect x="423" y="160" width="1" height="1" fill="#707070"/>
<rect x="435" y="160" width="1" height="1" fill="#707070"/>
<rect x="447" y="160" width="1" height="1" fill="#707070"/>
<rect x="459" y="157" width="1" height="4" fill="#707070"/>
<rect x="471" y="160" width="1" height="1" fill="#707070"/>
<rect x="483" y="160" width="1" height="1" fill="#707070"/>
<rect x="495" y="160" width="1" height="1" fill="#707070"/>
<text x="507" y="160" font-size="10" text-anchor="middle" fill="#222">2</text>
<rect x="519" y="160" width="1" height="1" fill="#707070"/>
<rect x="531" y="160" width="1" height="1" fill="#707070"/>
<rect x="543" y="160" width="1" height="1" fill="#707070"/>
<rect x="555" y="157" width="1" height="4" fill="#707070"/>
<rect x="567" y="160" width="1" height="1" fill="#707070"/>
<rect x="579" y="160" width="1" height="1" fill="#707070"/>
<rect x="591" y="160" width="1" height="1" fill="#707070"/>
<text x="603" y="160" font-size="10" text-anchor="middle" fill="#222">3</text>
<rect x="615" y="160" width="1" height="1" fill="#707070"/>
<rect x="627" y="160" width="1" height="1" fill="#707070"/>
<rect x="639" y="160" width="1" height="1" fill="#707070"/>
<rect x="651" y="157" width="1" height="4" fill="#707070"/>
<rect x="663" y="160" width="1" height="1" fill="#707070"/>
<rect x="675" y="160" width="1" height="1" fill="#707070"/>
<rect x="687" y="160" width="1" height="1" fill="#707070"/>
<text x="699" y="160" font-size="10" text-anchor="middle" fill="#222">4</text>
<rect x="711" y="160" width="1" height="1" fill="#707070"/>
<rect x="723" y="160" width="1" height="1" fill="#707070"/>
<rect x="735" y="160" width="1" height="1" fill="#707070"/>
<rect x="747" y="157" width="1" height="4" fill="#707070"/>
<rect x="759" y="160" width="1" height="1" fill="#707070"/>
<rect x="771" y="160" width="1" height="1" fill="#707070"/>
<rect x="783" y="160" width="1" height="1" fill="#707070"/>
<text x="795" y="160" font-size="10" text-anchor="middle" fill="#222">5</text>
<rect x="807" y="160" width="1" height="1" fill="#707070"/>
<rect x="299.5" y="187.5" width="12" height="50" fill="#fff" stroke="#c9c9dc" stroke-width="1"/>
<rect x="299.5" y="278.5" width="12" height="309" fill="#fff" stroke="#c9c9dc" stroke-width="1"/>
<rect x="299.5" y="609.5" width="12" height="18" fill="#fff" stroke="#c9c9dc" stroke-width="1"/>
<rect x="299.5" y="668.5" width="12" height="19" fill="#fff" stroke="#c9c9dc" stroke-width="1"/>
<rect x="299.5" y="709.5" width="12" height="7" fill="#fff" stroke="#c9c9dc" stroke-width="1"/>
<rect x="309" y="289" width="1" height="1" fill="#707070"/>
<rect x="309" y="301" width="1" height="1" fill="#707070"/>
<rect x="309" y="313" width="1" height="1" fill="#707070"/>
<rect x="306" y="325" width="4" height="1" fill="#707070"/>
<rect x="309" y="337" width="1" height="1" fill="#707070"/>
<rect x="309" y="349" width="1" height="1" fill="#707070"/>
<rect x="309" y="361" width="1" height="1" fill="#707070"/>
<text x="305.5" y="376" font-size="9" text-anchor="middle" fill="#222">1</text>
<rect x="309" y="385" width="1" height="1" fill="#707070"/>
<rect x="309" y="397" width="1" height="1" fill="#707070"/>
<rect x="309" y="409" width="1" height="1" fill="#707070"/>
<rect x="306" y="421" width="4" height="1" fill="#707070"/>
<rect x="309" y="433" width="1" height="1" fill="#707070"/>
<rect x="309" y="445" width="1" height="1" fill="#707070"/>
<rect x="309" y="457" width="1" height="1" fill="#707070"/>
<text x="305.5" y="472" font-size="9" text-anchor="middle" fill="#222">2</text>
<rect x="309" y="481" width="1" height="1" fill="#707070"/>
<rect x="309" y="493" width="1" height="1" fill="#707070"/>
<rect x="309" y="505" width="1" height="1" fill="#707070"/>
<rect x="306" y="517" width="4" height="1" fill="#707070"/>
<rect x="309" y="529" width="1" height="1" fill="#707070"/>
<rect x="309" y="541" width="1" height="1" fill="#707070"/>
<rect x="309" y="553" width="1" height="1" fill="#707070"/>
<text x="305.5" y="568" font-size="9" text-anchor="middle" fill="#222">3</text>
<rect x="309" y="577" width="1" height="1" fill="#707070"/>
<rect x="309" y="198" width="1" height="1" fill="#707070"/>
<rect x="309" y="210" width="1" height="1" fill="#707070"/>
<rect x="309" y="222" width="1" height="1" fill="#707070"/>
<rect x="309" y="234" width="1" height="1" fill="#707070"/>
<rect x="306" y="234" width="4" height="1" fill="#707070"/>
<rect x="309" y="619" width="1" height="1" fill="#707070"/>
<rect x="309" y="678" width="1" height="1" fill="#707070"/>
<rect x="315" y="167" width="497.5" height="19" fill="#ebebf0" stroke="#c8c8da" stroke-width="1" transform="translate(0.5,0.5)"/>
<text x="316" y="181" font-size="12" fill="#1e1e1e">Header</text>
<rect x="315" y="186" width="498" height="53" fill="#4a7fb8"/>
<rect x="315" y="186" width="498" height="53" fill="url(#gHs)"/>
<rect x="315" y="186" width="498" height="53" fill="url(#gHL)"/>
<path d="M318.5 239V199.5H813" fill="none" stroke="#a8c0dc" stroke-width="1"/>
<rect x="319" y="200" width="493" height="38" fill="url(#gHs)"/>
<rect x="319" y="200" width="493" height="38" fill="url(#gHL)"/>
<text x="319.5" y="228.3" font-size="24" font-weight="bold" fill="#fff" textLength="339" lengthAdjust="spacingAndGlyphs">Sales by Category Report</text>
<rect x="315" y="239" width="497.5" height="19" fill="#ebebf0" stroke="#c8c8da" stroke-width="1" transform="translate(0.5,0.5)"/>
<text x="316" y="253" font-size="12" fill="#1e1e1e">PageHeader</text>
<rect x="314.5" y="258.5" width="498" height="18" fill="#e4e4ea" stroke="#2a7fd6" stroke-width="1"/>
<text x="316" y="272" font-size="12" fill="#1e1e1e">GroupHeader0</text>
<text x="508" y="270" font-size="9" fill="#1e1e1e">CategoryName (CategoryName)</text>
<rect x="315" y="277" width="498" height="313" fill="#fff"/>
<rect x="315" y="277" width="498" height="313" fill="url(#gGs)"/>
<rect x="315" y="277" width="498" height="313" fill="url(#gGL)"/>
<path d="M345.5 303V281.5H545.5V303M546.5 303V281.5H813" fill="none" stroke="#c8c8da" stroke-width="1"/>
<path d="M545.5 302.5H813" stroke="#c8c8da" stroke-width="1.2"/>
<text x="347" y="300" font-size="12" fill="#4a86c8" letter-spacing="0.6">CategoryName</text>
<text x="546" y="300" font-size="12" fill="#4a86c8" letter-spacing="0.6">CategoryName</text>
<rect x="336" y="304" width="421" height="249" fill="url(#hatch)"/>
<rect x="340" y="308" width="413" height="241" fill="#fff"/>
<rect x="336.5" y="304.5" width="420" height="248" fill="none" stroke="#c8c8da" stroke-width="1"/>
<rect x="384.2" y="343.3" width="243.5" height="9" fill="#000080" stroke="#000" stroke-width="1"/>
<rect x="376" y="347.3" width="7" height="1.4" fill="#000"/>
<text x="373" y="352.3" font-size="12.5" text-anchor="end" fill="#000">1</text>
<rect x="384.2" y="360.2" width="274.1" height="9" fill="#000080" stroke="#000" stroke-width="1"/>
<rect x="376" y="364.2" width="7" height="1.4" fill="#000"/>
<text x="373" y="369.2" font-size="12.5" text-anchor="end" fill="#000">2</text>
<rect x="384.2" y="377.1" width="257.1" height="9" fill="#000080" stroke="#000" stroke-width="1"/>
<rect x="376" y="381.1" width="7" height="1.4" fill="#000"/>
<text x="373" y="386.1" font-size="12.5" text-anchor="end" fill="#000">3</text>
<rect x="384.2" y="394.0" width="185.8" height="9" fill="#000080" stroke="#000" stroke-width="1"/>
<rect x="376" y="398.0" width="7" height="1.4" fill="#000"/>
<text x="373" y="403.0" font-size="12.5" text-anchor="end" fill="#000">4</text>
<rect x="384.2" y="410.9" width="66.9" height="9" fill="#000080" stroke="#000" stroke-width="1"/>
<rect x="376" y="414.9" width="7" height="1.4" fill="#000"/>
<text x="373" y="419.9" font-size="12.5" text-anchor="end" fill="#000">5</text>
<rect x="384.2" y="427.8" width="185.8" height="9" fill="#000080" stroke="#000" stroke-width="1"/>
<rect x="376" y="431.8" width="7" height="1.4" fill="#000"/>
<text x="373" y="436.8" font-size="12.5" text-anchor="end" fill="#000">6</text>
<rect x="384.2" y="444.7" width="304.6" height="9" fill="#000080" stroke="#000" stroke-width="1"/>
<rect x="376" y="448.7" width="7" height="1.4" fill="#000"/>
<text x="373" y="453.7" font-size="12.5" text-anchor="end" fill="#000">7</text>
<rect x="384.2" y="461.6" width="148.4" height="9" fill="#000080" stroke="#000" stroke-width="1"/>
<rect x="376" y="465.6" width="7" height="1.4" fill="#000"/>
<text x="373" y="470.6" font-size="12.5" text-anchor="end" fill="#000">8</text>
<rect x="384.2" y="478.5" width="328.4" height="9" fill="#000080" stroke="#000" stroke-width="1"/>
<rect x="376" y="482.5" width="7" height="1.4" fill="#000"/>
<text x="373" y="487.5" font-size="12.5" text-anchor="end" fill="#000">9</text>
<rect x="384.2" y="495.4" width="90.7" height="9" fill="#000080" stroke="#000" stroke-width="1"/>
<rect x="376" y="499.4" width="7" height="1.4" fill="#000"/>
<text x="373" y="504.4" font-size="12.5" text-anchor="end" fill="#000">10</text>
<rect x="382.6" y="338" width="2" height="177" fill="#000"/>
<rect x="382.6" y="507" width="341" height="2" fill="#000"/>
<rect x="383.1" y="508" width="1.6" height="7" fill="#000"/>
<text x="383.7" y="528.5" font-size="12.5" text-anchor="middle" fill="#000">0</text>
<rect x="417.1" y="508" width="1.6" height="7" fill="#000"/>
<text x="417.7" y="528.5" font-size="12.5" text-anchor="middle" fill="#000">10</text>
<rect x="451.0" y="508" width="1.6" height="7" fill="#000"/>
<text x="451.6" y="528.5" font-size="12.5" text-anchor="middle" fill="#000">20</text>
<rect x="485.0" y="508" width="1.6" height="7" fill="#000"/>
<text x="485.6" y="528.5" font-size="12.5" text-anchor="middle" fill="#000">30</text>
<rect x="518.9" y="508" width="1.6" height="7" fill="#000"/>
<text x="519.5" y="528.5" font-size="12.5" text-anchor="middle" fill="#000">40</text>
<rect x="552.9" y="508" width="1.6" height="7" fill="#000"/>
<text x="553.5" y="528.5" font-size="12.5" text-anchor="middle" fill="#000">50</text>
<rect x="586.9" y="508" width="1.6" height="7" fill="#000"/>
<text x="587.5" y="528.5" font-size="12.5" text-anchor="middle" fill="#000">60</text>
<rect x="620.8" y="508" width="1.6" height="7" fill="#000"/>
<text x="621.4" y="528.5" font-size="12.5" text-anchor="middle" fill="#000">70</text>
<rect x="654.8" y="508" width="1.6" height="7" fill="#000"/>
<text x="655.4" y="528.5" font-size="12.5" text-anchor="middle" fill="#000">80</text>
<rect x="688.7" y="508" width="1.6" height="7" fill="#000"/>
<text x="689.3" y="528.5" font-size="12.5" text-anchor="middle" fill="#000">90</text>
<rect x="722.7" y="508" width="1.6" height="7" fill="#000"/>
<text x="723.3" y="528.5" font-size="12.5" text-anchor="middle" fill="#000">100</text>
<rect x="334.0" y="302.0" width="5" height="5" fill="#3399ff"/>
<rect x="544.0" y="302.0" width="5" height="5" fill="#3399ff"/>
<rect x="754.0" y="302.0" width="5" height="5" fill="#3399ff"/>
<rect x="334.0" y="426.0" width="5" height="5" fill="#3399ff"/>
<rect x="754.0" y="426.0" width="5" height="5" fill="#3399ff"/>
<rect x="334.0" y="550.0" width="5" height="5" fill="#3399ff"/>
<rect x="544.0" y="550.0" width="5" height="5" fill="#3399ff"/>
<rect x="754.0" y="550.0" width="5" height="5" fill="#3399ff"/>
<path d="M342.5 590V569.5H482.5V590M585.5 590V569.5H725.5V590" fill="none" stroke="#c8c8da" stroke-width="1"/>
<text x="343.5" y="586.5" font-size="12" fill="#4a86c8" letter-spacing="0.6">ProductName</text>
<text x="586" y="586.5" font-size="12" fill="#4a86c8" letter-spacing="0.6">ProductSales</text>
<rect x="315" y="589" width="497.5" height="18" fill="#ebebf0" stroke="#c8c8da" stroke-width="1" transform="translate(0.5,0.5)"/>
<text x="316" y="603" font-size="12" fill="#1e1e1e">Detail</text>
<rect x="315" y="608" width="498" height="20" fill="#fff"/>
<rect x="315" y="608" width="498" height="20" fill="url(#gDs)"/>
<rect x="315" y="608" width="498" height="20" fill="url(#gDL)"/>
<path d="M340.5 608V627.5H530.5V608M539.5 608V627.5H670.5V608" fill="none" stroke="#c8c8da" stroke-width="1"/>
<rect x="531" y="627" width="8" height="1.5" fill="#b8b8c8"/>
<text x="341.5" y="618.8" font-size="13" fill="#000" letter-spacing="0.1">ProductName</text>
<text x="592" y="618.8" font-size="13" fill="#000" letter-spacing="0.1">ProductSales</text>
<rect x="315" y="629" width="497.5" height="18" fill="#ebebf0" stroke="#c8c8da" stroke-width="1" transform="translate(0.5,0.5)"/>
<text x="316" y="643" font-size="12" fill="#1e1e1e">GroupFooter0</text>
<text x="508" y="641" font-size="9" fill="#1e1e1e">CategoryName (CategoryName)</text>
<rect x="315" y="648" width="497.5" height="18" fill="#ebebf0" stroke="#c8c8da" stroke-width="1" transform="translate(0.5,0.5)"/>
<text x="316" y="662" font-size="12" fill="#1e1e1e">PageFooter</text>
<rect x="315" y="667" width="498" height="21" fill="#fff"/>
<rect x="315" y="667" width="498" height="21" fill="url(#gPs)"/>
<rect x="315" y="667" width="498" height="21" fill="url(#gPL)"/>
<path d="M338.5 688V667.5H502.5V688M651 667.5V688" fill="none" stroke="#c8c8da" stroke-width="1"/>
<text x="339.5" y="680" font-size="13" fill="#000">Now()</text>
<text x="813" y="680" font-size="13" fill="#000" text-anchor="end" letter-spacing="-0.2">"Page " &amp; [Page] &amp; " of " &amp; [Pages]</text>
<rect x="315" y="689" width="497.5" height="18" fill="#ebebf0" stroke="#c8c8da" stroke-width="1" transform="translate(0.5,0.5)"/>
<text x="316" y="703" font-size="12" fill="#1e1e1e">Footer</text>
<rect x="315" y="708" width="498" height="10" fill="#fff"/>
<rect x="315" y="708" width="498" height="10" fill="url(#hatchF)"/>
<rect x="315" y="708" width="498" height="10" fill="url(#gFL)"/>
<rect x="813" y="148" width="18" height="587" fill="#f0f0f0"/>
<rect x="814" y="165" width="15" height="400" fill="#cdcdcd"/>
<path d="M818.6 159.8 L821.8 155.6 L825 159.8" fill="none" stroke="#505050" stroke-width="1.8"/>
<path d="M818.6 706.6 L821.8 710.8 L825 706.6" fill="none" stroke="#505050" stroke-width="1.8"/>
<rect x="296" y="718" width="517" height="17" fill="#f0f0f0"/>
<rect x="313" y="718" width="292" height="15" fill="#cdcdcd"/>
<path d="M307 722.2 L302.8 725.5 L307 728.8" fill="none" stroke="#505050" stroke-width="1.8"/>
<path d="M802.6 722.2 L806.8 725.5 L802.6 728.8" fill="none" stroke="#505050" stroke-width="1.8"/>
</svg>
<!-- status bar -->
<div class="a" style="left:0;top:735px;width:833px;height:1px;background:#f4f4ee"></div>
<div class="a" style="left:0;top:736px;width:833px;height:22px;background:#0083db"></div>
<div class="t" style="left:4px;top:740px;color:#fff;letter-spacing:-0.6px">Ready</div>
<div class="t" style="left:466px;top:740px;color:#fff;letter-spacing:-0.25px">Report: Sales by Category Report</div>
<div class="t" style="left:650px;top:740px;color:#fff;letter-spacing:-1px">100%</div>
<div class="a" style="left:688px;top:745px;width:8px;height:3px;background:#fff"></div>
<div class="a" style="left:698px;top:746px;width:105px;height:1px;background:#fff"></div>
<div class="a" style="left:747px;top:740px;width:4px;height:13px;background:#fff"></div>
<div class="a" style="left:807px;top:745px;width:9px;height:3px;background:#fff"></div>
<div class="a" style="left:810px;top:742px;width:3px;height:9px;background:#fff"></div>

<div class="a" style="left:0;top:0;width:833px;height:758px;border-left:1px solid #111;border-top:1px solid #111;border-right:2px solid #111;border-bottom:1px solid #111"></div>
</body></html>
